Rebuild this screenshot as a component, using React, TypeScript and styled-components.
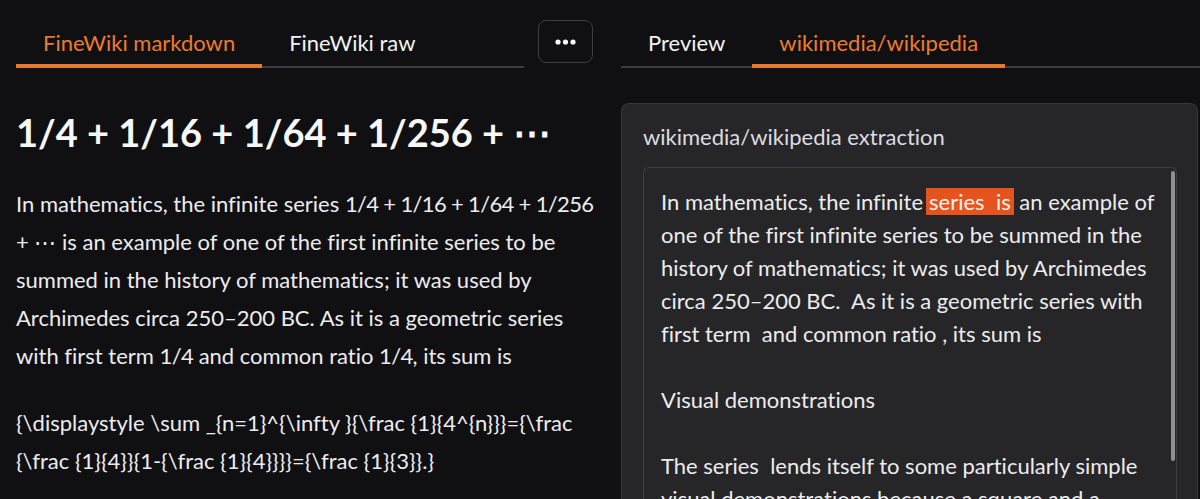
import React from "react";
import styled, { createGlobalStyle } from "styled-components";

const GlobalStyle = createGlobalStyle`
  html, body {
    margin: 0;
    padding: 0;
    background: #101012;
    color: #ececef;
    font-family: "Lato", "Liberation Sans", sans-serif;
    font-variant-ligatures: none;
    overflow: hidden;
  }
`;

const Page = styled.div`
  display: grid;
  grid-template-columns: 588px 1fr;
  column-gap: 17px;
  padding: 20px 0 0 16px;
  height: 479px;
`;

const Column = styled.div`
  display: flex;
  flex-direction: column;
  min-width: 0;
`;

const TabBar = styled.div`
  display: flex;
  align-items: flex-start;
`;

const TabList = styled.div<{ $width?: string }>`
  display: flex;
  flex: ${(p) => (p.$width ? `0 0 ${p.$width}` : "1")};
  height: 48px;
  box-sizing: border-box;
  border-bottom: 2px solid #3c3c41;
`;

const Tab = styled.div<{ $active?: boolean }>`
  display: flex;
  align-items: center;
  height: 48px;
  box-sizing: border-box;
  padding: 0 27px;
  margin-bottom: -2px;
  border-bottom: 4px solid ${(p) => (p.$active ? "#e8782c" : "transparent")};
  color: ${(p) => (p.$active ? "#ee7b2c" : "#f2f2f4")};
  font-size: 22px;
  white-space: nowrap;
`;

const MoreButton = styled.button`
  width: 55px;
  height: 43px;
  margin-left: 14px;
  display: flex;
  align-items: center;
  justify-content: center;
  background: transparent;
  border: 1px solid #3d3d42;
  border-radius: 8px;
  padding: 0;
  color: #fafafa;
`;

const Title = styled.h1`
  margin: 42px 0 0;
  font-size: 38px;
  line-height: 44px;
  font-weight: 700;
  color: #f7f7f8;
  white-space: nowrap;
`;

const Para = styled.p<{ $gap?: number }>`
  margin: ${(p) => p.$gap ?? 31}px 0 0;
  font-size: 22px;
  line-height: 38px;
  color: #ececef;
`;

const MathText = styled.span`
  letter-spacing: -0.03em;
`;

const Card = styled.div`
  margin-top: 35px;
  margin-right: 2px;
  flex: 1;
  background: #262629;
  border: 1px solid #38383c;
  border-bottom: none;
  border-radius: 8px 8px 0 0;
  padding: 21px 20px 0 21px;
  display: flex;
  flex-direction: column;
`;

const CardTitle = styled.div`
  font-size: 22px;
  line-height: 24px;
  color: #dcdce0;
`;

const Extract = styled.div`
  position: relative;
  margin-top: 18px;
  flex: 1;
  border: 1px solid #3d3d42;
  border-bottom: none;
  border-radius: 6px 6px 0 0;
  padding: 17px 12px 0 17px;
  overflow: hidden;
  font-size: 22px;
  line-height: 33px;
  color: #ececef;
  white-space: pre-wrap;
`;

const ScrollThumb = styled.div`
  position: absolute;
  top: 3px;
  right: 1px;
  width: 4px;
  height: 290px;
  border-radius: 2px;
  background: #8e8e93;
`;

const Mark = styled.span`
  background: #e5541e;
  color: #fff3ec;
  padding: 0 3px;
  margin-left: 3px;
`;

const Dots = () => (
  <svg width="21" height="6" viewBox="0 0 21 6" fill="currentColor">
    <circle cx="3" cy="3" r="2.6" />
    <circle cx="10.5" cy="3" r="2.6" />
    <circle cx="18" cy="3" r="2.6" />
  </svg>
);

const App = (): React.ReactElement => (
  <>
    <GlobalStyle />
    <Page>
      <Column>
        <TabBar>
          <TabList $width="508px">
            <Tab $active>FineWiki markdown</Tab>
            <Tab>FineWiki raw</Tab>
          </TabList>
          <MoreButton aria-label="More">
            <Dots />
          </MoreButton>
        </TabBar>
        <Title>1/4 + 1/16 + 1/64 + 1/256 + ⋯</Title>
        <Para>
          In mathematics, the infinite series <MathText>1/4 + 1/16 + 1/64 + 1/256</MathText>{" "}
          + ⋯ is an example of one of the first infinite series to be summed in the
          history of mathematics; it was used by Archimedes circa 250–200 BC. As it is
          a geometric series with first term <MathText>1/4</MathText> and common ratio{" "}
          <MathText>1/4</MathText>, its sum is
        </Para>
        <Para $gap={29}>
          {"{\\displaystyle \\sum _{n=1}^{\\infty }{\\frac {1}{4^{n}}}={\\frac {\\frac {1}{4}}{1-{\\frac {1}{4}}}}={\\frac {1}{3}}.}"}
        </Para>
      </Column>
      <Column>
        <TabBar>
          <TabList>
            <Tab>Preview</Tab>
            <Tab $active>wikimedia/wikipedia</Tab>
          </TabList>
        </TabBar>
        <Card>
          <CardTitle>wikimedia/wikipedia extraction</CardTitle>
          <Extract>
            <ScrollThumb />
            {"In mathematics, the infinite"}
            <Mark>{"series  is"}</Mark>
            {
              " an example of one of the first infinite series to be summed in the history of mathematics; it was used by Archimedes circa 250–200 BC.  As it is a geometric series with first term  and common ratio , its sum is\n\nVisual demonstrations\n\nThe series  lends itself to some particularly simple visual demonstrations because a square and a triangle both divide into four similar pieces, each of which contains 1/4 the area of the original."
            }
          </Extract>
        </Card>
      </Column>
    </Page>
  </>
);

export default App;
